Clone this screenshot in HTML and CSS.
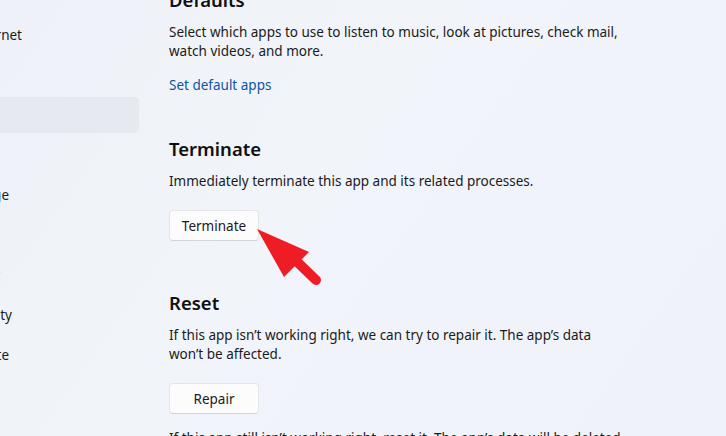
FILE: index.html
```html
<!DOCTYPE html>
<html>
<head>
	<title>Settings - Apps</title>
	<link rel="stylesheet" href="styles.css">
</head>
<body>
	<div class="window">
		<nav class="sidebar">
			<a class="nav-item tail-22">Network &amp; internet</a>
			<a class="nav-item">Personalization</a>
			<a class="nav-item selected">Apps</a>
			<a class="nav-item">Accounts</a>
			<a class="nav-item tail-9">Time &amp; language</a>
			<a class="nav-item">Gaming</a>
			<a class="nav-item">Accessibility</a>
			<a class="nav-item tail-12">Privacy &amp; security</a>
			<a class="nav-item tail-9">Windows Update</a>
		</nav>

		<main class="content">
			<section class="block defaults">
				<h2>Defaults</h2>
				<p class="desc">Select which apps to use to listen to music, look at pictures, check mail, watch videos, and more.</p>
				<a class="link" href="#">Set default apps</a>
			</section>

			<section class="block terminate">
				<h2>Terminate</h2>
				<p class="desc">Immediately terminate this app and its related processes.</p>
				<button class="btn">Terminate</button>
			</section>

			<section class="block reset">
				<h2>Reset</h2>
				<p class="desc">If this app isn’t working right, we can try to repair it. The app’s data won’t be affected.</p>
				<button class="btn">Repair</button>
				<p class="desc next">If this app still isn’t working right, reset it. The app’s data will be deleted.</p>
			</section>
		</main>
	</div>

	<!-- Red annotation arrow pointing at the Terminate button -->
	<svg class="arrow" width="726" height="436" viewBox="0 0 726 436">
		<line x1="292" y1="257" x2="316" y2="280" stroke="#ee1c25" stroke-width="10" stroke-linecap="round"/>
		<polygon points="257,229 309,252 284,277" fill="#ee1c25"/>
	</svg>
</body>
</html>
```

FILE: styles.css
```css
html, body { margin: 0; padding: 0; height: 100%; overflow: hidden; }
body {
    background: linear-gradient(125deg, #eef2f8 0%, #f1f4f9 40%, #eff2f9 100%);
    font-family: "Segoe UI", "Noto Sans", sans-serif;
    font-size: 13.5px;
    color: #1b1b1b;
}

.window { display: flex; height: 100%; }

/* Sidebar: labels end before / near the left window edge */
.sidebar {
    width: 139px;
    flex: none;
    display: flex;
    flex-direction: column;
    gap: 4px;
    margin-top: 17px;
}
.nav-item {
    display: flex;
    justify-content: flex-end;
    padding-right: 145px;
    height: 36px;
    line-height: 36px;
    border-radius: 0 5px 5px 0;
    white-space: nowrap;
    color: #1b1b1b;
}
.nav-item.tail-22 { padding-right: 117px; }
.nav-item.tail-12 { padding-right: 127px; }
.nav-item.tail-9 { padding-right: 130px; }
.nav-item.selected { background: #e6e9ef; padding-right: 139px; }

/* Content column */
.content {
    flex: 1;
    padding-left: 30px;
    margin-top: -14px;
}
.block h2 {
    margin: 0;
    font-size: 18.5px;
    line-height: 28px;
    font-weight: 600;
    color: #0f0f0f;
}
.desc {
    margin: 9px 0 0 0;
    width: 452px;
    line-height: 19px;
}
.link {
    display: block;
    margin-top: 15px;
    line-height: 19px;
    color: #0a56a2;
    text-decoration: none;
}
.terminate { margin-top: 40px; }
.reset { margin-top: 48px; }
.btn {
    display: block;
    margin-top: 19px;
    width: 90px;
    height: 31px;
    padding: 0;
    background: #fcfcfd;
    border: 1px solid #e3e5e9;
    border-bottom-color: #d2d4d8;
    border-radius: 4px;
    font-family: inherit;
    font-size: 13.5px;
    color: #1b1b1b;
}
.desc.next { margin-top: 15px; width: 600px; }

/* Annotation overlay */
.arrow { position: absolute; left: 0; top: 0; pointer-events: none; }
```
